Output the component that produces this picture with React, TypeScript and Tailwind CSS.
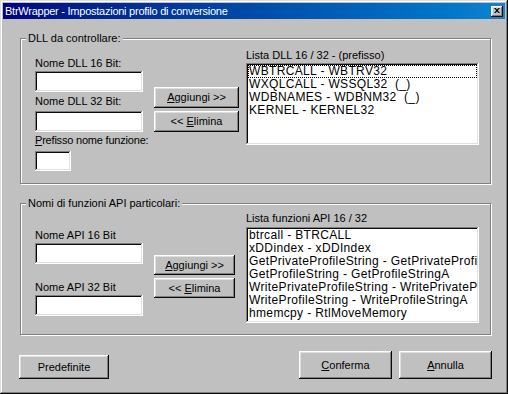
import type { ReactNode } from "react"

// Win98 bevels
const raised =
  "shadow-[inset_-1px_-1px_#0a0a0a,inset_1px_1px_#fff,inset_-2px_-2px_#808080,inset_2px_2px_#dfdfdf]"
const sunken =
  "shadow-[inset_-1px_-1px_#fff,inset_1px_1px_#808080,inset_-2px_-2px_#dfdfdf,inset_2px_2px_#0a0a0a]"

function GroupBox({ title, className, children }: { title: string; className: string; children: ReactNode }) {
  return (
    <div className={`relative border border-[#808080] shadow-[1px_1px_#fff,inset_1px_1px_#fff] ${className}`}>
      <span className="absolute left-[5px] top-[-7px] whitespace-nowrap bg-[#c0c0c0] px-[2px] leading-[13px]">{title}</span>
      {children}
    </div>
  )
}

function Btn({ children, className }: { children: ReactNode; className: string }) {
  return (
    <button className={`flex items-center justify-center whitespace-nowrap bg-[#c0c0c0] leading-[13px] text-black ${raised} ${className}`}>
      {children}
    </button>
  )
}

function Field({ className }: { className: string }) {
  return <div className={`bg-white ${sunken} ${className}`} />
}

function ListBox({ items, className, focusFirst }: { items: string[]; className: string; focusFirst?: boolean }) {
  return (
    <div className={`overflow-hidden bg-white p-[2px] ${sunken} ${className}`}>
      {items.map((item, i) => (
        <div
          key={item}
          className={`h-[13px] overflow-hidden whitespace-pre pl-px text-[12px] leading-[13px] tracking-[0.35px] ${
            focusFirst && i === 0 ? "outline-1 -outline-offset-1 outline-dotted outline-black" : ""
          }`}
        >
          {item}
        </div>
      ))}
    </div>
  )
}

export default function App() {
  return (
    <div className="h-[394px] w-[508px] bg-[#c0c0c0] p-[3px] font-['Liberation_Sans',Arial,sans-serif] text-[11px] text-black shadow-[inset_-1px_-1px_#0a0a0a,inset_1px_1px_#dfdfdf,inset_-2px_-2px_#808080,inset_2px_2px_#fff]">
      {/* Title bar */}
      <div className="flex h-[16px] items-center bg-gradient-to-r from-[#000080] to-[#1084d0] pl-[2px] pr-[2px]">
        <span className="flex-1 whitespace-nowrap leading-[13px] tracking-[-0.25px] text-white">
          BtrWrapper - Impostazioni profilo di conversione
        </span>
        <div className={`flex h-[11px] w-[12px] items-center justify-center bg-[#c0c0c0] ${raised}`}>
          <svg width="6" height="5" viewBox="0 0 6 5" className="-mt-px">
            <path d="M0 0h1.5L3 1.5 4.5 0H6L3.75 2.5 6 5H4.5L3 3.5 1.5 5H0l2.25-2.5z" fill="#000" />
          </svg>
        </div>
      </div>

      <div className="pl-[17px] pt-[19px]">
        {/* DLL group */}
        <GroupBox title="DLL da controllare:" className="h-[146px] w-[471px]">
          <div className="flex items-start">
            <div className="ml-[14px] mt-[18px] flex w-[108px] flex-col whitespace-nowrap">
              <span className="leading-[13px]">Nome DLL 16 Bit:</span>
              <Field className="mt-px h-[21px] w-[108px]" />
              <span className="mt-[3px] leading-[13px]">Nome DLL 32 Bit:</span>
              <Field className="mt-[3px] h-[21px] w-[108px]" />
              <span className="mt-[2px] leading-[13px] tracking-[-0.2px]">
                <u>P</u>refisso nome funzione:
              </span>
              <Field className="mt-[4px] h-[20px] w-[36px]" />
            </div>
            <div className="ml-[11px] mt-[48px] flex w-[85px] flex-col gap-[3px]">
              <Btn className="h-[21px] w-[85px]">
                <span>
                  <u>A</u>ggiungi &gt;&gt;
                </span>
              </Btn>
              <Btn className="h-[21px] w-[85px]">
                <span>
                  &lt;&lt; <u>E</u>limina
                </span>
              </Btn>
            </div>
            <div className="ml-[7px] mt-[10px] flex flex-col">
              <span className="whitespace-nowrap leading-[13px]">Lista DLL 16 / 32 - (prefisso)</span>
              <ListBox
                focusFirst
                className="mt-px h-[82px] w-[233px]"
                items={["WBTRCALL - WBTRV32", "WXQLCALL - WSSQL32  (_)", "WDBNAMES - WDBNM32  (_)", "KERNEL - KERNEL32"]}
              />
            </div>
          </div>
        </GroupBox>

        {/* API group */}
        <GroupBox title="Nomi di funzioni API particolari:" className="mt-[19px] h-[132px] w-[471px]">
          <div className="flex items-start">
            <div className="ml-[14px] mt-[25px] flex w-[108px] flex-col whitespace-nowrap">
              <span className="leading-[13px]">Nome API 16 Bit</span>
              <Field className="mt-px h-[21px] w-[108px]" />
              <span className="mt-[17px] leading-[13px]">Nome API 32 Bit</span>
              <Field className="mt-px h-[21px] w-[108px]" />
            </div>
            <div className="ml-[11px] mt-[51px] flex w-[81px] flex-col gap-[3px]">
              <Btn className="h-[20px] w-[81px]">
                <span>
                  <u>A</u>ggiungi &gt;&gt;
                </span>
              </Btn>
              <Btn className="h-[20px] w-[81px]">
                <span>
                  &lt;&lt; <u>E</u>limina
                </span>
              </Btn>
            </div>
            <div className="ml-[11px] mt-[8px] flex flex-col">
              <span className="whitespace-nowrap leading-[13px]">Lista funzioni API 16 / 32</span>
              <ListBox
                className="mt-[2px] h-[96px] w-[233px]"
                items={[
                  "btrcall - BTRCALL",
                  "xDDindex - xDDIndex",
                  "GetPrivateProfileString - GetPrivateProfileStringA",
                  "GetProfileString - GetProfileStringA",
                  "WritePrivateProfileString - WritePrivateProfileStringA",
                  "WriteProfileString - WriteProfileStringA",
                  "hmemcpy - RtlMoveMemory",
                ]}
              />
            </div>
          </div>
        </GroupBox>

        {/* Bottom buttons */}
        <div className="-ml-px mt-[16px] flex w-[473px] items-end">
          <Btn className="h-[24px] w-[90px]">Predefinite</Btn>
          <div className="flex-1" />
          <Btn className="h-[28px] w-[93px]">
            <span>
              <u>C</u>onferma
            </span>
          </Btn>
          <Btn className="ml-[7px] h-[28px] w-[93px]">
            <span>
              <u>A</u>nnulla
            </span>
          </Btn>
        </div>
      </div>
    </div>
  )
}
